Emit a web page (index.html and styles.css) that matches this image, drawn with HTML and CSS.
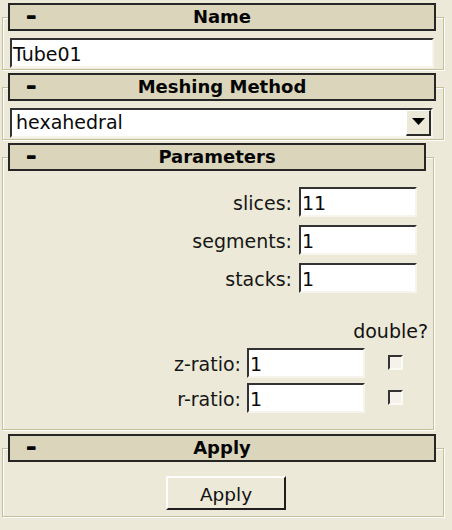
FILE: index.html
```html
<!DOCTYPE html>
<html>
<head>
<meta charset="utf-8">
<link rel="stylesheet" href="styles.css">
</head>
<body>
<div class="panel">
  <section class="group g-name">
    <div class="head"><span class="dash">–</span><span class="title">Name</span><span></span></div>
    <div class="entry wide">Tube01</div>
  </section>
  <section class="group g-mesh">
    <div class="head"><span class="dash">–</span><span class="title">Meshing Method</span><span></span></div>
    <div class="combo">
      <span class="val">hexahedral</span>
      <span class="drop"><svg width="13" height="7" viewBox="0 0 13 7"><path d="M0 0H13L6.5 7Z" fill="#000"/></svg></span>
    </div>
  </section>
  <section class="group g-params">
    <div class="head"><span class="dash">–</span><span class="title">Parameters</span><span></span></div>
    <div class="fields">
      <div class="row"><span class="lbl">slices:</span><span class="entry num">11</span></div>
      <div class="row"><span class="lbl">segments:</span><span class="entry num">1</span></div>
      <div class="row"><span class="lbl">stacks:</span><span class="entry num">1</span></div>
    </div>
    <div class="ratios">
      <span class="dbl">double?</span>
      <span class="lbl">z-ratio:</span><span class="entry num">1</span><span class="cell"><span class="check"></span></span>
      <span class="lbl">r-ratio:</span><span class="entry num">1</span><span class="cell"><span class="check"></span></span>
    </div>
  </section>
  <section class="group g-apply">
    <div class="head"><span class="dash">–</span><span class="title">Apply</span><span></span></div>
    <div class="actions"><button class="btn">Apply</button></div>
  </section>
</div>
</body>
</html>
```
FILE: styles.css
```css
html, body {
  margin: 0;
  padding: 0;
  background: #ece9d8;
}
body {
  font-family: "DejaVu Sans", sans-serif;
  font-size: 19px;
  color: #111;
}
.panel {
  display: flex;
  flex-direction: column;
  overflow: hidden;
  height: 530px;
}
.group {
  margin: 17px 8px 0 2px;
  border: 1px solid #c6bf9c;
  box-shadow: inset 1px 1px 0 #fff, 1px 1px 0 #fff;
  padding: 0 0 1px 0;
  display: flex;
  flex-direction: column;
}
.g-params {
  margin-right: 18px;
  margin-top: 17px;
  padding-bottom: 16px;
}
.g-apply {
  margin-top: 18px;
  padding-bottom: 6px;
}
.head {
  margin: -15px 7px 0 5px;
  height: 28px;
  box-sizing: border-box;
  background: #dbd6bb;
  border: 2px solid #262626;
  display: grid;
  grid-template-columns: 1fr auto 1fr;
  align-items: center;
  line-height: 24px;
  font-weight: bold;
  font-size: 18px;
  color: #050505;
}
.dash {
  justify-self: start;
  margin-left: 16px;
  font-size: 21px;
  line-height: 24px;
  text-shadow: 0 1px 0 #050505;
  position: relative;
  top: -1px;
}
.entry {
  box-sizing: border-box;
  height: 30px;
  background: #fff;
  border-style: solid;
  border-width: 2px;
  border-color: #333 #f6f4ec #f6f4ec #333;
  padding: 3px 2px 0 1px;
  line-height: 23px;
  color: #0a0a0a;
  white-space: nowrap;
}
.wide {
  margin: 7px 9px 0 7px;
}
.combo {
  margin: 7px 10px 0 7px;
  box-sizing: border-box;
  height: 30px;
  background: #fff;
  border-style: solid;
  border-width: 2px;
  border-color: #333 #f6f4ec #f6f4ec #333;
  display: flex;
  align-items: stretch;
}
.combo .val {
  flex: 1;
  padding: 1px 0 0 4px;
  line-height: 23px;
  color: #0a0a0a;
}
.drop {
  width: 25px;
  box-sizing: border-box;
  background: #ece9d8;
  border-style: solid;
  border-width: 1px 2px 2px 1px;
  border-color: #fff #2a2a2a #2a2a2a #fff;
  display: flex;
  align-items: center;
  justify-content: center;
}
.drop svg {
  display: block;
  margin-top: -2px;
}
.fields {
  margin: 16px 16px 0 0;
  display: flex;
  flex-direction: column;
  gap: 8px;
}
.row {
  display: flex;
  justify-content: flex-end;
  align-items: baseline;
  gap: 7px;
}
.fields .entry {
  width: 118px;
}
.lbl {
  color: #161616;
}
.ratios {
  margin: 26px 5px 0 0;
  display: grid;
  grid-template-columns: 1fr 118px 63px;
  row-gap: 5px;
  align-items: baseline;
}
.ratios .lbl {
  justify-self: end;
  padding-right: 6px;
}
.dbl {
  grid-column: 2 / 4;
  justify-self: end;
  line-height: 24px;
}
.cell {
  align-self: center;
  display: flex;
  justify-content: center;
}
.check {
  display: block;
  width: 15px;
  height: 15px;
  box-sizing: border-box;
  border-style: solid;
  border-width: 2px;
  border-color: #333 #fbfaf4 #fbfaf4 #333;
  background: #f4f2ea;
  margin-right: 2px;
  margin-bottom: 2px;
}
.actions {
  margin-top: 14px;
  display: flex;
  justify-content: center;
  padding-left: 6px;
}
.btn {
  width: 120px;
  height: 34px;
  box-sizing: border-box;
  background: #ece9d8;
  border-style: solid;
  border-width: 2px;
  border-color: #fdfdfb #1e1e1e #1e1e1e #fdfdfb;
  font-family: "DejaVu Sans", sans-serif;
  font-size: 18.5px;
  color: #111;
  padding: 3px 0 0 0;
  line-height: 27px;
}
```
